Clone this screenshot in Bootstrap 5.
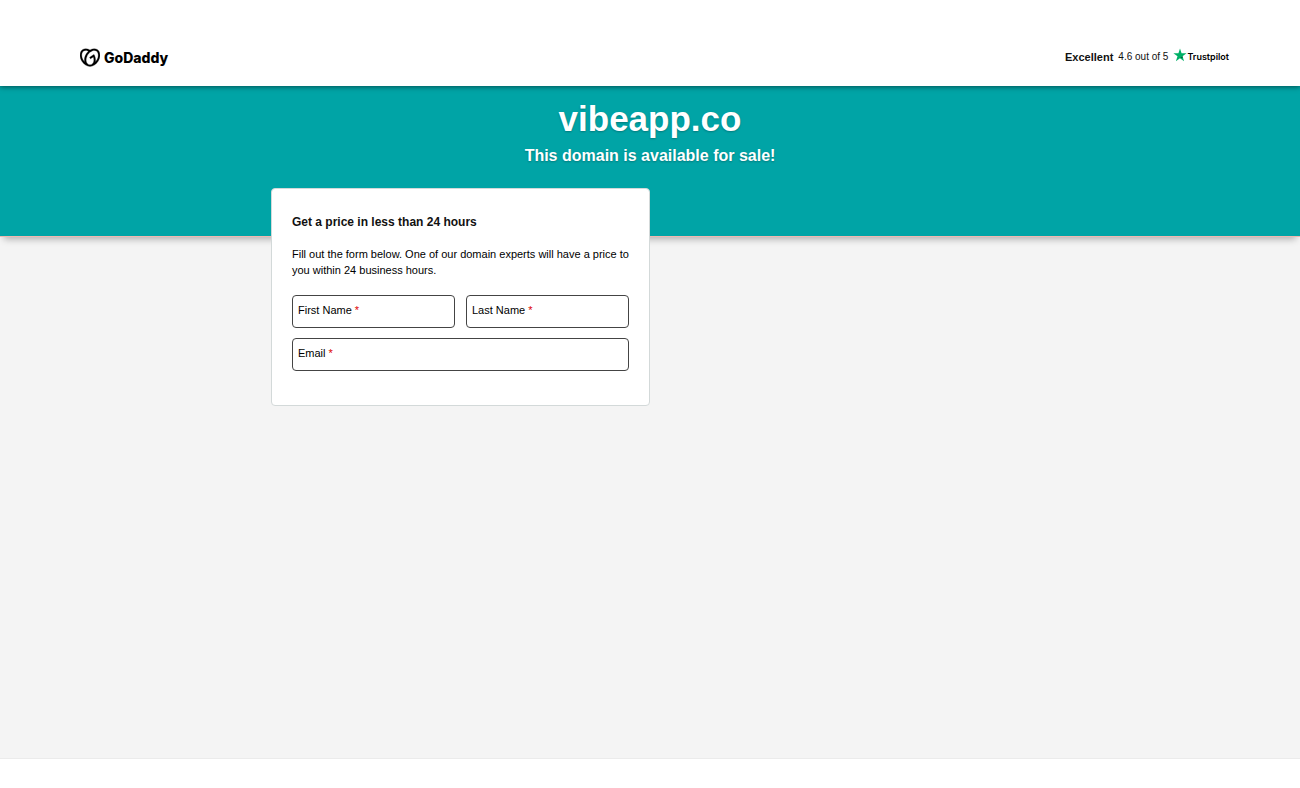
<!DOCTYPE html>
<html lang="en">
<head>
<meta charset="utf-8">
<meta name="viewport" content="width=device-width, initial-scale=1">
<title>vibeapp.co is for sale</title>
<link rel="stylesheet" href="https://cdn.jsdelivr.net/npm/bootstrap@5.3.0/dist/css/bootstrap.min.css">
<style>
body { font-family: "Liberation Sans", Arial, sans-serif; font-size: 11px; line-height: 16px; color: #111; background: #fff; }
.site-header { padding: 47px 71px 17px 80px; box-shadow: 0 1px 5px rgba(0,0,0,.5); background: #fff; z-index: 2; }
.brand { color: #000; gap: 4px; height: 22px; }
.brand-name { font: 800 14px/22px "Inter", sans-serif; }
.rating { gap: 5px; height: 20px; }
.score { font-size: 10px; }
.trust-name { font: 600 9px/16px "Inter", sans-serif; color: #000; }
.hero { background: #00a4a6; color: #fff; padding-top: 12px; height: 150px; box-shadow: 0 1px 0 #f0b8b0, 0 7px 7px -4px rgba(0,0,0,.3); text-shadow: 0 1px 2px rgba(0,0,0,.25); }
.domain { font-size: 35px; line-height: 42px; margin-bottom: 6px; }
.tagline { font-size: 16px; line-height: 20px; }
.main-area { background: #f4f4f4; border-bottom: 1px solid #ebebeb; }
.page-width { max-width: 758px; margin-top: -48px; }
.price-card { border: 1px solid #d3d9d9; border-radius: 4px; padding: 24px 20px 34px; color: #111; }
.price-title { font-size: 12px; line-height: 18px; margin-bottom: 15px; }
.intro { margin-bottom: 17px; color: #000; }
.form-grid { --bs-gutter-x: 11px; --bs-gutter-y: 10px; }
.field input { height: 33px; border: 1px solid #444; border-radius: 4px; padding: 4px 6px; font-size: 11px; background: #fff; }
.field label { left: 6px; top: 7px; color: #000; pointer-events: none; }
.star { color: #d00; }
.page-foot { height: 29px; }
</style>
</head>
<body class="d-flex flex-column min-vh-100">
<header class="site-header position-relative d-flex justify-content-between align-items-start">
  <a href="#" class="brand d-flex align-items-center text-decoration-none" aria-label="GoDaddy">
    <svg width="20" height="20" viewBox="0 0.5 24 24" aria-hidden="true"><path fill="#000" stroke="#000" stroke-width=".3" d="M20.702 2.29c-2.494-1.554-5.778-1.187-8.706.654C9.076 1.104 5.79.736 3.3 2.29c-3.941 2.463-4.42 8.806-1.07 14.167 2.47 3.954 6.333 6.269 9.77 6.226 3.439.043 7.301-2.273 9.771-6.226 3.347-5.361 2.872-11.704-1.069-14.167zM4.042 15.328a12.838 12.838 0 01-1.546-3.541 10.12 10.12 0 01-.336-3.338c.15-1.98.956-3.524 2.27-4.345 1.315-.822 3.052-.87 4.903-.137.281.113.556.24.825.382A15.11 15.11 0 007.5 7.54c-2.035 3.255-2.655 6.878-1.945 9.765a13.247 13.247 0 01-1.514-1.98zm17.465-3.541a12.866 12.866 0 01-1.547 3.54 13.25 13.25 0 01-1.513 1.984c.635-2.589.203-5.76-1.353-8.734a.39.39 0 00-.563-.153l-4.852 3.032a.397.397 0 00-.126.546l.712 1.139a.395.395 0 00.547.126l3.145-1.965c.101.306.203.606.28.916.296 1.086.41 2.214.335 3.337-.15 1.982-.956 3.525-2.27 4.347a4.437 4.437 0 01-2.25.65h-.101a4.432 4.432 0 01-2.25-.65c-1.314-.822-2.121-2.365-2.27-4.347-.074-1.123.039-2.251.335-3.337a13.212 13.212 0 014.05-6.482 10.148 10.148 0 012.849-1.765c1.845-.733 3.586-.685 4.9.137 1.316.822 2.122 2.365 2.271 4.345a10.146 10.146 0 01-.33 3.334z"/></svg>
    <span class="brand-name">GoDaddy</span>
  </a>
  <a href="#" class="rating d-flex align-items-center text-decoration-none text-reset">
    <strong>Excellent</strong>
    <span class="score">4.6 out of 5</span>
    <span class="d-flex align-items-center">
      <svg class="mb-1" width="14" height="14" viewBox="0 0 24 24" aria-hidden="true"><path fill="#00b067" d="M12 1l2.7 8.2h8.6l-7 5.1 2.7 8.2-7-5.1-7 5.1 2.7-8.2-7-5.1h8.6z"/><path fill="#005128" d="M16.9 16.2l-.6-1.9-4.3 3.1z"/></svg>
      <span class="trust-name">Trustpilot</span>
    </span>
  </a>
</header>
<section class="hero position-relative text-center">
  <h1 class="domain fw-bold">vibeapp.co</h1>
  <p class="tagline fw-bold mb-0">This domain is available for sale!</p>
</section>
<main class="main-area flex-grow-1">
  <div class="page-width container-fluid p-0">
    <div class="row g-0">
      <div class="col-12 col-sm-6">
        <form class="card price-card">
          <h2 class="price-title fw-bold">Get a price in less than 24 hours</h2>
          <p class="intro">Fill out the form below. One of our domain experts will have a price to you within 24 business hours.</p>
          <div class="row form-grid">
            <div class="col-6"><div class="field position-relative">
              <input class="w-100 d-block" type="text" id="first" required>
              <label class="position-absolute" for="first">First Name <span class="star">*</span></label>
            </div></div>
            <div class="col-6"><div class="field position-relative">
              <input class="w-100 d-block" type="text" id="last" required>
              <label class="position-absolute" for="last">Last Name <span class="star">*</span></label>
            </div></div>
            <div class="col-12"><div class="field position-relative">
              <input class="w-100 d-block" type="email" id="email" required>
              <label class="position-absolute" for="email">Email <span class="star">*</span></label>
            </div></div>
          </div>
        </form>
      </div>
    </div>
  </div>
</main>
<footer class="page-foot"></footer>
<script src="https://cdn.jsdelivr.net/npm/bootstrap@5.3.0/dist/js/bootstrap.bundle.min.js"></script>
</body>
</html>
